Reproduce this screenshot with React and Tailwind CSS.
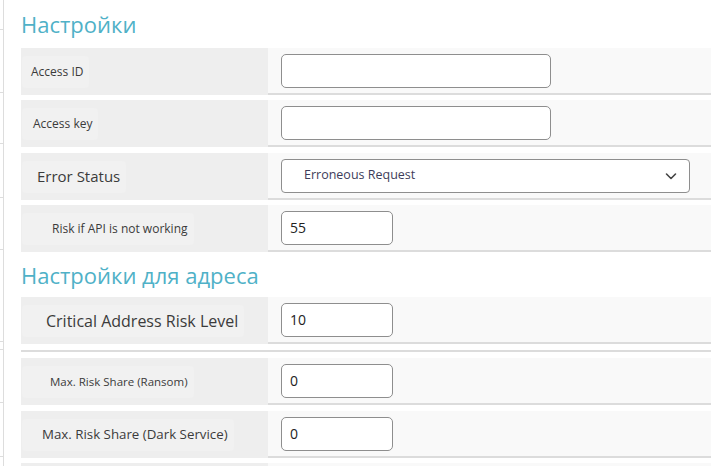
import React from 'react';

const font = { fontFamily: '"Open Sans", "Noto Sans", sans-serif' };

function Row({ label, labelClass, children, pad = 'pl-[9px]' }) {
  return (
    <div className="flex h-[47px] shrink-0">
      <div className="w-[247px] shrink-0 bg-[#eeeeee] flex items-center">
        <span className={`ml-[1px] h-[32px] flex items-center ${pad} pr-[6px] rounded bg-[#f1f1f1] text-[#3b3b3b] ${labelClass}`}>
          {label}
        </span>
      </div>
      <div className="flex-1 bg-[#f9f9f9] border-b-2 border-[#dcdcdc] flex items-center pl-[13px]">
        {children}
      </div>
    </div>
  );
}

function TextBox({ value = '', wide }) {
  return (
    <div
      className={`h-[34px] ${wide ? 'w-[270px]' : 'w-[112px]'} bg-white border border-[#8e8e8e] rounded-[5px] flex items-center px-[8px] text-[14px] text-[#222]`}
    >
      {value}
    </div>
  );
}

function Heading({ children, h }) {
  return (
    <div className={`${h} shrink-0 flex items-center text-[22px] text-[#4fb1c7] leading-none`}>
      {children}
    </div>
  );
}

function Gap({ h }) {
  return <div className={`${h} shrink-0`} />;
}

export default function App() {
  const strip = [30, 63, 51, 54, 52, 92, 8, 53, 54];
  return (
    <div className="w-[711px] h-[466px] overflow-hidden bg-white flex" style={font}>
      <div className="w-[4px] shrink-0 border-r border-[#dddddd] flex flex-col">
        {strip.map((h, i) => (
          <div key={i} className="shrink-0 border-b border-[#dddddd]" style={{ height: h }} />
        ))}
      </div>
      <div className="w-[17px] shrink-0" />
      <div className="flex-1 flex flex-col">
        <Heading h="h-[48px]">Настройки</Heading>
        <Row label="Access ID" labelClass="text-[12px]">
          <TextBox wide />
        </Row>
        <Gap h="h-[5px]" />
        <Row label="Access key" labelClass="text-[12px]" pad="pl-[11px]">
          <TextBox wide />
        </Row>
        <Gap h="h-[6px]" />
        <Row label="Error Status" labelClass="text-[15px]" pad="pl-[15px]">
          <div className="h-[34px] w-[409px] bg-white border border-[#8e8e8e] rounded-[4px] flex items-center justify-between pl-[22px] pr-[11px] text-[12.5px] text-[#3d3d5a]">
            <span>Erroneous Request</span>
            <svg width="14" height="14" viewBox="0 0 14 14" fill="none">
              <path d="M2.5 5 L7 9.5 L11.5 5" stroke="#444" strokeWidth="1.6" strokeLinecap="round" strokeLinejoin="round" />
            </svg>
          </div>
        </Row>
        <Gap h="h-[5px]" />
        <Row label="Risk if API is not working" labelClass="text-[12px]" pad="pl-[30px]">
          <TextBox value="55" />
        </Row>
        <Heading h="h-[45px]">Настройки для адреса</Heading>
        <Row label="Critical Address Risk Level" labelClass="text-[16px]" pad="pl-[24px]">
          <TextBox value="10" />
        </Row>
        <Gap h="h-[6px]" />
        <div className="h-[2px] shrink-0 bg-[#dcdcdc]" />
        <Gap h="h-[6px]" />
        <Row label="Max. Risk Share (Ransom)" labelClass="text-[11.5px]" pad="pl-[28px]">
          <TextBox value="0" />
        </Row>
        <Gap h="h-[6px]" />
        <Row label="Max. Risk Share (Dark Service)" labelClass="text-[13.3px]" pad="pl-[20px]">
          <TextBox value="0" />
        </Row>
        <Gap h="h-[5px]" />
        <Row label="" labelClass="text-[12px]">
          <div />
        </Row>
      </div>
    </div>
  );
}
